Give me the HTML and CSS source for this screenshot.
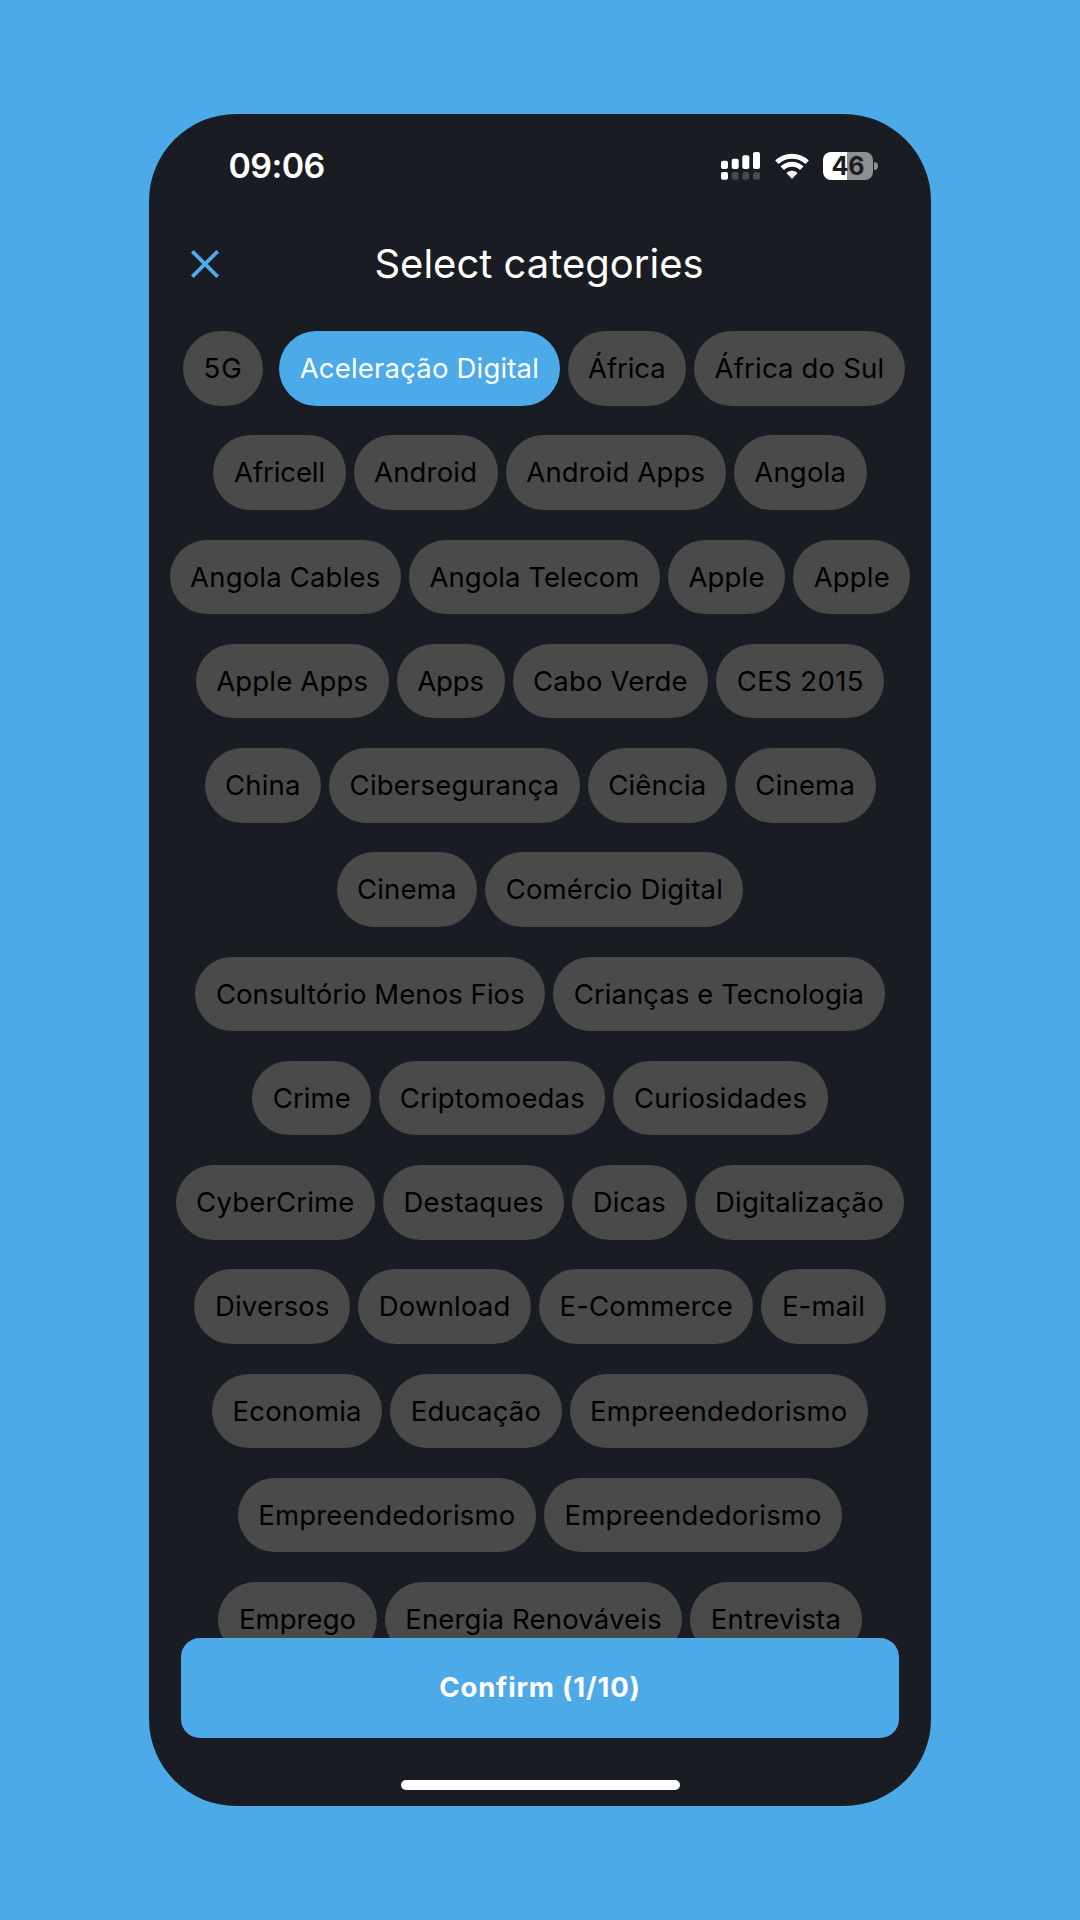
FILE: index.html
```html
<!DOCTYPE html>
<html lang="pt">
<head>
<meta charset="utf-8">
<title>Select categories</title>
<link rel="stylesheet" href="styles.css">
</head>
<body>
<main class="phone">
  <div class="status">
    <span class="time">09:06</span>
    <svg class="signal" width="40" height="28" viewBox="0 0 40 28" fill="#fff">
      <rect x="0" y="8.7" width="7" height="8.3" rx="2"/><rect x="10.7" y="6.7" width="7" height="10.3" rx="2"/><rect x="21.3" y="3.3" width="7" height="13.7" rx="2"/><rect x="32" y="0" width="7" height="17" rx="2"/>
      <rect x="0" y="20" width="7" height="7.8" rx="2"/>
      <g fill="#47494e"><rect x="10.7" y="20" width="7" height="7.8" rx="2.4"/><rect x="21.3" y="20" width="7" height="7.8" rx="2.4"/><rect x="32" y="20" width="7" height="7.8" rx="2.4"/></g>
    </svg>
    <svg class="wifi" width="34" height="26" viewBox="0 0 34 26">
      <g fill="none" stroke="#fff" stroke-width="5"><path d="M1.9 9.3A21.6 21.6 0 0 1 32.1 9.3"/><path d="M7.3 15.2A13.8 13.8 0 0 1 26.7 15.2"/></g>
      <path fill="#fff" d="M11.4 20A8 8 0 0 1 22.6 20L17.6 25.2Q17 25.8 16.4 25.2Z"/>
    </svg>
    <div class="battery"><span class="level">46</span></div>
  </div>
  <header class="header">
    <svg class="close" width="28" height="28" viewBox="0 0 28 28" stroke="#4daae9" stroke-width="3.8"><path d="M1.3 1.3L26.7 26.7M26.7 1.3L1.3 26.7"/></svg>
    <h1 class="title">Select categories</h1>
  </header>
  <section class="list">
    <div class="row"><div class="slot"><span class="chip wide">5G</span></div><span class="chip selected">Aceleração Digital</span><span class="chip tight">África</span><span class="chip">África do Sul</span></div>
    <div class="row"><span class="chip tight">Africell</span><span class="chip">Android</span><span class="chip">Android Apps</span><span class="chip">Angola</span></div>
    <div class="row"><span class="chip">Angola Cables</span><span class="chip snug">Angola Telecom</span><span class="chip">Apple</span><span class="chip">Apple</span></div>
    <div class="row"><span class="chip">Apple Apps</span><span class="chip tight">Apps</span><span class="chip">Cabo Verde</span><span class="chip loose">CES 2015</span></div>
    <div class="row"><span class="chip">China</span><span class="chip">Cibersegurança</span><span class="chip">Ciência</span><span class="chip">Cinema</span></div>
    <div class="row"><span class="chip">Cinema</span><span class="chip">Comércio Digital</span></div>
    <div class="row"><span class="chip snug">Consultório Menos Fios</span><span class="chip snug">Crianças e Tecnologia</span></div>
    <div class="row"><span class="chip snug">Crime</span><span class="chip">Criptomoedas</span><span class="chip">Curiosidades</span></div>
    <div class="row"><span class="chip">CyberCrime</span><span class="chip">Destaques</span><span class="chip">Dicas</span><span class="chip">Digitalização</span></div>
    <div class="row"><span class="chip">Diversos</span><span class="chip">Download</span><span class="chip">E-Commerce</span><span class="chip">E-mail</span></div>
    <div class="row"><span class="chip">Economia</span><span class="chip">Educação</span><span class="chip">Empreendedorismo</span></div>
    <div class="row"><span class="chip">Empreendedorismo</span><span class="chip">Empreendedorismo</span></div>
    <div class="row"><span class="chip snug">Emprego</span><span class="chip">Energia Renováveis</span><span class="chip">Entrevista</span></div>
  </section>
  <button class="confirm">Confirm (1/10)</button>
  <div class="home"></div>
</main>
</body>
</html>
```
FILE: styles.css
```css
* { box-sizing: border-box; }
body {
  margin: 0;
  height: 1920px;
  padding-top: 114px;
  background: #4daae9;
  font-family: Inter, "Liberation Sans", sans-serif;
}
.phone {
  width: 782px;
  height: 1692px;
  margin: 0 auto;
  border-radius: 87px;
  background: #191c23;
  overflow: hidden;
  display: flex;
  flex-direction: column;
}
.status {
  height: 104px;
  padding: 0 53px 0 79.5px;
  display: flex;
  align-items: center;
  color: #fff;
}
.time { flex: 1; font-size: 34px; font-weight: 600; line-height: 40px; letter-spacing: -0.6px; }
.wifi { margin: 0 14.5px 0 13.5px; }
.battery {
  position: relative;
  width: 50px;
  height: 28px;
  border-radius: 8px;
  background: linear-gradient(90deg, #fff 24px, #8e8f92 24px);
  margin-right: 5px;
  display: flex;
  align-items: center;
  justify-content: center;
}
.battery::after {
  content: "";
  position: absolute;
  left: 51px;
  top: 10px;
  width: 4px;
  height: 8px;
  border-radius: 0 4px 4px 0;
  background: #8e8f92;
}
.level { color: #191c23; font-size: 25px; font-weight: 700; line-height: 28px; }
.header {
  height: 113px;
  padding: 0 44px 21px 42px;
  display: grid;
  grid-template-columns: 28px 1fr 28px;
  align-items: center;
}
.title {
  margin: 0;
  text-align: center;
  color: #fff;
  font-size: 40px;
  font-weight: 400;
  line-height: 48px;
}
.list {
  height: 1306.6px;
  flex: none;
  display: flex;
  flex-direction: column;
  gap: 29.75px;
  overflow: hidden;
}
.row { display: flex; justify-content: center; gap: 8px; flex: none; }
.slot { width: 96px; display: flex; justify-content: center; }
.chip {
  height: 74.5px;
  padding: 0 20.5px;
  border-radius: 38px;
  background: #4a4a4a;
  color: #000;
  font-size: 27.5px;
  line-height: 74px;
  letter-spacing: 0.18px;
  white-space: nowrap;
}
.tight { letter-spacing: -0.08px; }
.snug { letter-spacing: 0.07px; }
.loose { letter-spacing: 0.38px; }
.wide { letter-spacing: 1px; }
.selected { background: #4daae9; color: #fff; }
.confirm {
  height: 100px;
  margin: 0 32px;
  padding: 0 0 2px;
  flex: none;
  border: 0;
  border-radius: 19px;
  background: #4daae9;
  color: #fff;
  font: 700 27.5px/98px Inter, "Liberation Sans", sans-serif;
  letter-spacing: 0.85px;
}
.home {
  width: 279px;
  height: 10px;
  margin: 42.4px auto 0;
  border-radius: 5px;
  background: #fff;
}
```
